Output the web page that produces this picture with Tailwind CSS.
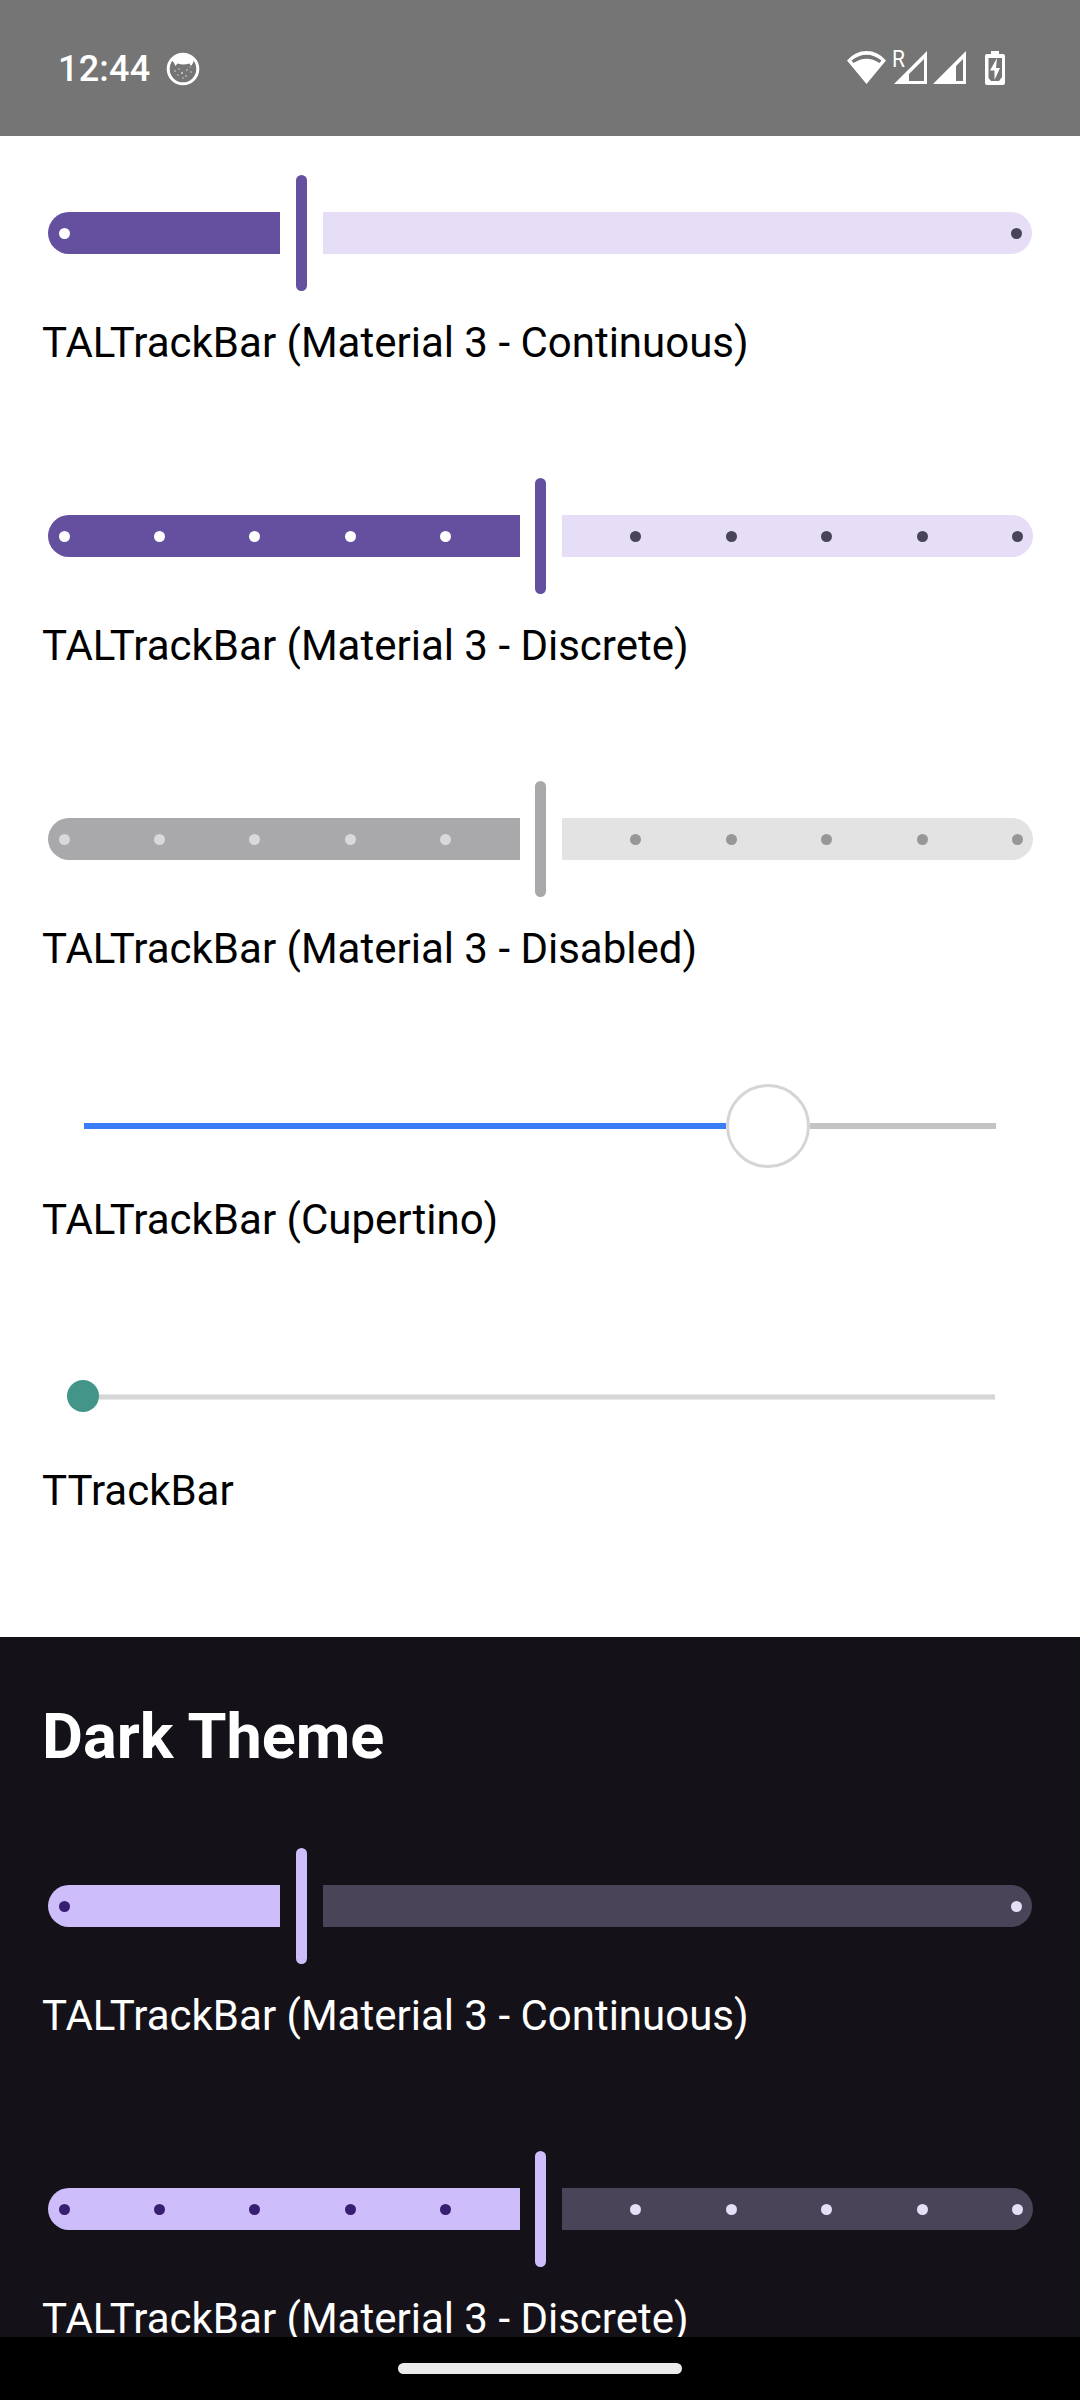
<!DOCTYPE html>
<html lang="en">
<head>
<meta charset="utf-8">
<title>TALTrackBar</title>
<script src="https://cdn.jsdelivr.net/npm/@tailwindcss/browser@4"></script>
</head>
<body class="flex h-[2400px] w-[1080px] flex-col overflow-hidden bg-white font-['Roboto',sans-serif] text-[42px] leading-[50px] text-black">
  <!-- Status bar -->
  <header class="flex h-[136px] shrink-0 items-start justify-between bg-[#757575] pl-[58px] text-white">
    <div class="flex items-start">
      <span class="mt-[48px] w-[108px] whitespace-nowrap text-[36px] leading-[42px] font-medium tracking-[0.2px]">12:44</span>
      <svg class="mt-[52px]" width="34" height="34" viewBox="0 0 34 34">
        <circle cx="17" cy="17" r="14.8" fill="none" stroke="#fff" stroke-width="3"/>
        <path d="M6 8C12 1 22 1 28 8L27 11L25 14L23.5 11.5Q17 13.500 11.500 11.500L9.500 14L8 11Z" fill="#fff"/>
        <g fill="#e0e0e0"><circle cx="9" cy="19" r=".8"/><circle cx="13" cy="17" r=".7"/><circle cx="16" cy="21" r=".9"/><circle cx="21" cy="18" r=".8"/><circle cx="25" cy="20" r=".7"/><circle cx="12" cy="23" r=".7"/><circle cx="20" cy="24" r=".8"/><circle cx="17" cy="26" r=".7"/><circle cx="24" cy="15" r=".6"/></g>
      </svg>
    </div>
    <svg class="mt-[45px]" width="240" height="48" viewBox="840 45 240 48" fill="#fff">
      <path fill-rule="evenodd" d="M866.500 84L847 60.500Q855 51 866.500 51T886 60.500ZM851.500 60.500L853.500 63Q866.500 54.500 879.500 63L881.500 60.500Q866.500 49 851.500 60.500Z"/>
      <text x="892" y="67" font-family="Roboto" font-size="23" textLength="13" lengthAdjust="spacingAndGlyphs">R</text>
      <path fill-rule="evenodd" d="M894 84L927 51V84ZM909 81H924V59L909 74Z"/>
      <path fill-rule="evenodd" d="M933 84L966 51V84ZM956 81H963V59L956 66Z"/>
      <path fill-rule="evenodd" d="M991 51H999V54H1003Q1005 54 1005 56V83Q1005 85 1003 85H987Q985 85 985 83V56Q985 54 987 54H991ZM988.500 58V78L991 81H999L1002 77V58Z"/>
      <path d="M997 58L990 70.500H994.500V80L1000 68H996Z"/>
    </svg>
  </header>

  <!-- Light theme -->
  <main class="h-[1501px] shrink-0 pt-[39px]">
    <section class="h-[303px]">
      <div class="flex h-[116px] items-center pl-12">
        <div class="flex h-[42px] w-[232px] items-start rounded-l-full bg-[#64509e] pt-4 pl-[11px]"><i class="size-[11px] rounded-full bg-white"></i></div>
        <div class="mx-4 h-full w-[11px] rounded-full bg-[#64509e]"></div>
        <div class="flex h-[42px] w-[709px] items-start justify-end rounded-r-full bg-[#e6def6] pt-4 pr-[10px]"><i class="size-[11px] rounded-full bg-[#4a4458]"></i></div>
      </div>
      <p class="mt-[27px] pl-[42px]">TALTrackBar (Material 3 - Continuous)</p>
    </section>

    <section class="h-[303px]">
      <div class="flex h-[116px] items-center pl-12">
        <div class="flex h-[42px] w-[472px] items-start gap-[84.2px] rounded-l-full bg-[#64509e] pt-4 pl-[11px]">
          <i class="size-[11px] shrink-0 rounded-full bg-white"></i><i class="size-[11px] shrink-0 rounded-full bg-white"></i><i class="size-[11px] shrink-0 rounded-full bg-white"></i><i class="size-[11px] shrink-0 rounded-full bg-white"></i><i class="size-[11px] shrink-0 rounded-full bg-white"></i>
        </div>
        <div class="mr-4 ml-[15px] h-full w-[11px] rounded-full bg-[#64509e]"></div>
        <div class="flex h-[42px] w-[471px] items-start justify-end gap-[84.4px] rounded-r-full bg-[#e6def6] pt-4 pr-[10px]">
          <i class="size-[11px] shrink-0 rounded-full bg-[#4a4458]"></i><i class="size-[11px] shrink-0 rounded-full bg-[#4a4458]"></i><i class="size-[11px] shrink-0 rounded-full bg-[#4a4458]"></i><i class="size-[11px] shrink-0 rounded-full bg-[#4a4458]"></i><i class="size-[11px] shrink-0 rounded-full bg-[#4a4458]"></i>
        </div>
      </div>
      <p class="mt-[27px] pl-[42px]">TALTrackBar (Material 3 - Discrete)</p>
    </section>

    <section class="h-[303px]">
      <div class="flex h-[116px] items-center pl-12">
        <div class="flex h-[42px] w-[472px] items-start gap-[84.2px] rounded-l-full bg-[#a9a9ab] pt-4 pl-[11px]">
          <i class="size-[11px] shrink-0 rounded-full bg-[#dad8de]"></i><i class="size-[11px] shrink-0 rounded-full bg-[#dad8de]"></i><i class="size-[11px] shrink-0 rounded-full bg-[#dad8de]"></i><i class="size-[11px] shrink-0 rounded-full bg-[#dad8de]"></i><i class="size-[11px] shrink-0 rounded-full bg-[#dad8de]"></i>
        </div>
        <div class="mr-4 ml-[15px] h-full w-[11px] rounded-full bg-[#a9a9ab]"></div>
        <div class="flex h-[42px] w-[471px] items-start justify-end gap-[84.4px] rounded-r-full bg-[#e3e3e3] pt-4 pr-[10px]">
          <i class="size-[11px] shrink-0 rounded-full bg-[#979799]"></i><i class="size-[11px] shrink-0 rounded-full bg-[#979799]"></i><i class="size-[11px] shrink-0 rounded-full bg-[#979799]"></i><i class="size-[11px] shrink-0 rounded-full bg-[#979799]"></i><i class="size-[11px] shrink-0 rounded-full bg-[#979799]"></i>
        </div>
      </div>
      <p class="mt-[27px] pl-[42px]">TALTrackBar (Material 3 - Disabled)</p>
    </section>

    <section class="h-[296px]">
      <div class="flex h-[84px] items-center pl-[84px]">
        <div class="h-[6px] w-[642px] bg-[#3b7df6]"></div>
        <div class="size-[84px] rounded-full border-3 border-[#d5d5d5] bg-white"></div>
        <div class="h-[6px] w-[186px] bg-[#c4c4c4]"></div>
      </div>
      <p class="mt-[27px] pl-[42px]">TALTrackBar (Cupertino)</p>
    </section>

    <section>
      <div class="flex h-8 items-start pl-[67px]">
        <div class="size-8 rounded-full bg-[#429588]"></div>
        <div class="mt-[14px] h-[6px] w-[896px] border-y border-[#e8e8e8] bg-[#d6d6d6]"></div>
      </div>
      <p class="mt-[54px] pl-[42px]">TTrackBar</p>
    </section>
  </main>

  <!-- Dark theme -->
  <div class="h-[700px] shrink-0 overflow-hidden bg-[#141218] pt-[63px] text-white">
    <h2 class="pl-[42px] text-[63px] leading-[74px] font-bold">Dark Theme</h2>
    <section class="mt-[74px] h-[303px]">
      <div class="flex h-[116px] items-center pl-12">
        <div class="flex h-[42px] w-[232px] items-start rounded-l-full bg-[#cdbdfb] pt-4 pl-[11px]"><i class="size-[11px] rounded-full bg-[#371e70]"></i></div>
        <div class="mx-4 h-full w-[11px] rounded-full bg-[#cdbdfb]"></div>
        <div class="flex h-[42px] w-[709px] items-start justify-end rounded-r-full bg-[#4a4458] pt-4 pr-[10px]"><i class="size-[11px] rounded-full bg-[#e6def6]"></i></div>
      </div>
      <p class="mt-[27px] pl-[42px]">TALTrackBar (Material 3 - Continuous)</p>
    </section>
    <section class="h-[303px]">
      <div class="flex h-[116px] items-center pl-12">
        <div class="flex h-[42px] w-[472px] items-start gap-[84.2px] rounded-l-full bg-[#cdbdfb] pt-4 pl-[11px]">
          <i class="size-[11px] shrink-0 rounded-full bg-[#371e70]"></i><i class="size-[11px] shrink-0 rounded-full bg-[#371e70]"></i><i class="size-[11px] shrink-0 rounded-full bg-[#371e70]"></i><i class="size-[11px] shrink-0 rounded-full bg-[#371e70]"></i><i class="size-[11px] shrink-0 rounded-full bg-[#371e70]"></i>
        </div>
        <div class="mr-4 ml-[15px] h-full w-[11px] rounded-full bg-[#cdbdfb]"></div>
        <div class="flex h-[42px] w-[471px] items-start justify-end gap-[84.4px] rounded-r-full bg-[#4a4458] pt-4 pr-[10px]">
          <i class="size-[11px] shrink-0 rounded-full bg-[#e6def6]"></i><i class="size-[11px] shrink-0 rounded-full bg-[#e6def6]"></i><i class="size-[11px] shrink-0 rounded-full bg-[#e6def6]"></i><i class="size-[11px] shrink-0 rounded-full bg-[#e6def6]"></i><i class="size-[11px] shrink-0 rounded-full bg-[#e6def6]"></i>
        </div>
      </div>
      <p class="mt-[27px] pl-[42px]">TALTrackBar (Material 3 - Discrete)</p>
    </section>
  </div>

  <!-- Navigation bar -->
  <footer class="flex h-[63px] shrink-0 justify-center bg-black pt-[26px]">
    <div class="h-[11px] w-[284px] rounded-full bg-[#ebebeb]"></div>
  </footer>
</body>
</html>
